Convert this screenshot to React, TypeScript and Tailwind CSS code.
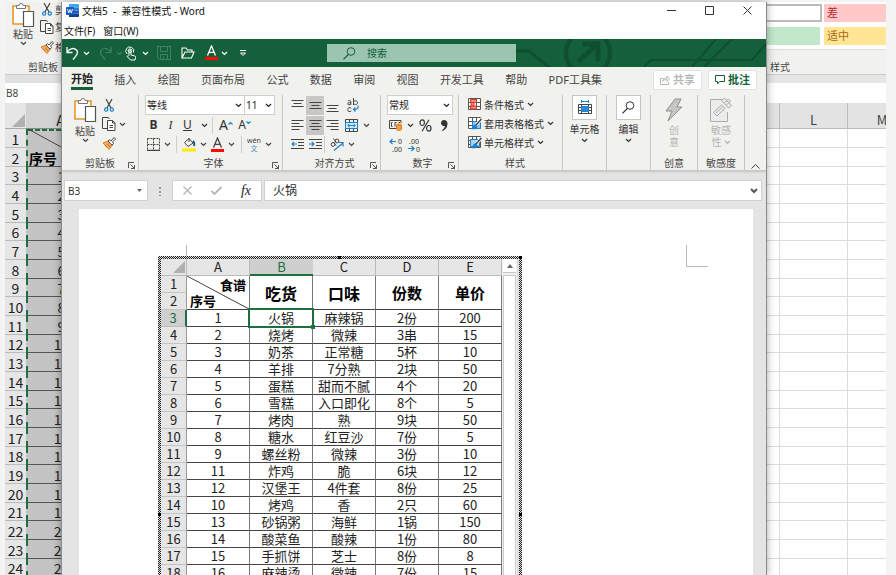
import type { ReactNode } from 'react';

const UI = "font-['Noto_Sans','Noto_Sans_CJK_SC',sans-serif]";
const SHEET = "font-['Noto_Sans_CJK_SC',sans-serif]";

const TABS = ['开始', '插入', '绘图', '页面布局', '公式', '数据', '审阅', '视图', '开发工具', '帮助', 'PDF工具集'];

const ROWS = [
  ['1', '火锅', '麻辣锅', '2份', '200'],
  ['2', '烧烤', '微辣', '3串', '15'],
  ['3', '奶茶', '正常糖', '5杯', '10'],
  ['4', '羊排', '7分熟', '2块', '50'],
  ['5', '蛋糕', '甜而不腻', '4个', '20'],
  ['6', '雪糕', '入口即化', '8个', '5'],
  ['7', '烤肉', '熟', '9块', '50'],
  ['8', '糖水', '红豆沙', '7份', '5'],
  ['9', '螺丝粉', '微辣', '3份', '10'],
  ['11', '炸鸡', '脆', '6块', '12'],
  ['12', '汉堡王', '4件套', '8份', '25'],
  ['10', '烤鸡', '香', '2只', '60'],
  ['13', '砂锅粥', '海鲜', '1锅', '150'],
  ['14', '酸菜鱼', '酸辣', '1份', '80'],
  ['15', '手抓饼', '芝士', '8份', '8'],
  ['16', '麻辣烫', '微辣', '7份', '15'],
];

const BACK_ROWS = Array.from({ length: 24 }, (_, i) => i + 1);

export default function App() {
  return (
    <div className={`flex h-screen overflow-hidden bg-[#f4f4f4] px-[5px] pt-[2px] text-[10px] leading-[14px] text-[#444] ${UI}`}>
      <ExcelLeft />
      <WordWindow />
      <ExcelRight />
      <div className="w-[5px] shrink-0" />
    </div>
  );
}

/* ---------- workbook behind the window ---------- */

function ExcelLeft() {
  return (
    <aside className="w-[56px] shrink-0 overflow-hidden bg-[#e4e4e4]">
      <div className="h-[72px] bg-[#f1f1ef]">
        <div className="flex h-[58px] gap-[5px] pl-[6px]">
          <div className="flex w-[24px] shrink-0 flex-col items-center whitespace-nowrap">
            <PasteIcon />
            <span>粘贴</span>
            <Chevron />
          </div>
          <div className="flex shrink-0 flex-col">
            <SmallRow icon={<ScissorsIcon />} text="剪切" />
            <SmallRow icon={<CopyIcon />} text="复制" />
            <SmallRow icon={<BrushIcon />} text="格式刷" />
          </div>
        </div>
        <div className="whitespace-nowrap pl-[23px]">剪贴板</div>
      </div>
      <div className="h-[9px] border-t border-[#ccc] bg-[#e1e1e1]" />
      <div className="h-[20px] bg-white pl-[1px] leading-[20px]">B8</div>
      <table className={`w-[90px] table-fixed border-separate border-spacing-0 text-center text-[14px] leading-[16px] text-[#222] ${SHEET}`}>
        <thead>
          <tr className="h-[26px]">
            <th className="w-[21px] border-b border-[#aaa] bg-[#e6e6e6] p-0">
              <svg className="mt-[8px] ml-[6px]" width="14" height="14"><path d="M14 1v13H1z" fill="#b1b1b1" /></svg>
            </th>
            <th className="w-[69px] border-b border-[#888] bg-[#d2d2d2] p-0 align-bottom font-normal">A</th>
          </tr>
        </thead>
        <tbody>
          {BACK_ROWS.map((n) => (
            <tr key={n} className={n % 3 === 0 ? 'h-[18px]' : 'h-[19px]'}>
              <th className="border-b border-[#bbb] bg-[#e6e6e6] p-0 align-bottom font-normal">{n}</th>
              {n === 1 && (
                <td rowSpan={2} className="relative border-b border-l-2 border-b-[#555] border-l-[#1d6f42] bg-[#c4c4c4] p-0 pl-[1px] text-left align-bottom font-bold text-black [border-left-style:dashed]">
                  <svg className="absolute top-0 left-0" width="68" height="38"><path d="M0 1h68" stroke="#1d6f42" strokeWidth="2" strokeDasharray="5 2" /><path d="M0 0L68 37" stroke="#444" /></svg>
                  序号
                </td>
              )}
              {n > 2 && (
                <td className="border-b border-l-2 border-b-[#555] border-l-[#1d6f42] bg-[#c4c4c4] p-0 align-bottom [border-left-style:dashed]">{n - 2}</td>
              )}
            </tr>
          ))}
        </tbody>
      </table>
    </aside>
  );
}

function SmallRow({ icon, text }: { icon: ReactNode; text: string }) {
  return (
    <div className="flex h-[20px] items-center gap-[1px] whitespace-nowrap first:h-[15px]">
      {icon}
      {text}
    </div>
  );
}

function ExcelRight() {
  return (
    <aside className="w-[119px] shrink-0 overflow-hidden bg-white">
      <div className="h-[72px] bg-[#f1f1ef]">
        <div className="grid h-[48px] grid-cols-[55px_1fr] gap-x-[2px] gap-y-[5px] border-b border-[#ddd] bg-white pt-[2px] pb-[4px] text-[11px] leading-[18px]">
          <div className="border-2 border-l-0 border-[#bbb]" />
          <div className="bg-[#ffc9c9] pl-[3px] text-[#b3262a]">差</div>
          <div className="mr-[2px] bg-[#c2e8cc]" />
          <div className="bg-[#ffe594] pl-[3px] text-[#a86a10]">适中</div>
        </div>
        <div className="pt-[10px] pl-[3px]">样式</div>
      </div>
      <div className="h-[9px] border-t border-[#ccc] bg-[#e6e6e6]" />
      <div className="h-[20px] bg-white" />
      <table className={`w-[149px] table-fixed border-separate border-spacing-0 text-[13px] leading-[16px] ${SHEET}`}>
        <thead>
          <tr className="h-[26px]">
            <th className="w-[13px] border-r border-b border-[#bbb] bg-[#e3e3e3] p-0" />
            <th className="w-[68px] border-r border-b border-[#bbb] bg-[#e3e3e3] p-0 align-bottom font-normal">L</th>
            <th className="w-[68px] border-b border-[#bbb] bg-[#e3e3e3] p-0 align-bottom font-normal">M</th>
          </tr>
        </thead>
        <tbody>
          {BACK_ROWS.map((n) => (
            <tr key={n} className={n % 3 === 0 ? 'h-[18px]' : 'h-[19px]'}>
              <td className="border-r border-b border-[#dcdcdc] p-0" />
              <td className="border-r border-b border-[#dcdcdc] p-0" />
              <td className="border-b border-[#dcdcdc] p-0" />
            </tr>
          ))}
        </tbody>
      </table>
    </aside>
  );
}

/* ---------- word window ---------- */

function WordWindow() {
  return (
    <main className="relative z-10 flex min-w-0 flex-1 flex-col overflow-hidden border-x border-[#8a8a8a] bg-[#e4e4e4] shadow-[0_0_8px_rgba(0,0,0,0.35)]">
      <header className="bg-white text-[#111]">
        <div className="flex h-[17px] items-center pl-[4px]">
          <WordIcon />
          <h1 className="flex-1 pl-[3px] text-[10px] whitespace-pre">{'文档5  -  兼容性模式 - Word'}</h1>
          <button aria-label="最小化" className="flex w-[38px] justify-center"><svg width="9" height="9"><path d="M0 4.5h9" stroke="#333" /></svg></button>
          <button aria-label="最大化" className="flex w-[38px] justify-center"><svg width="9" height="9"><path d="M.5.5h8v8h-8z" fill="none" stroke="#333" /></svg></button>
          <button aria-label="关闭" className="flex w-[38px] justify-center"><svg width="9" height="9"><path d="M.5.5l8 8m0-8l-8 8" stroke="#333" /></svg></button>
        </div>
        <div className="flex h-[20px] items-center gap-[8px] pl-[2px] pt-[4px]">
          <button>文件(F)</button>
          <button>窗口(W)</button>
        </div>
      </header>
      <QuickBar />
      <Ribbon />
      <FormulaBar />
      <Page />
    </main>
  );
}

function QuickBar() {
  return (
    <div className="relative flex h-[28px] shrink-0 items-center overflow-hidden bg-[#14603a] pl-[4px] text-white">
      <svg className="absolute top-0 right-0" width="260" height="28" fill="none" stroke="#0f4f30" strokeWidth="3">
        <path d="M8 12h15l21 17" />
        <circle cx="82" cy="14" r="22" strokeWidth="4" />
        <path d="M72 23L91 5M76 5h16v17" strokeWidth="5" />
        <path d="M138 28l7-7h100M186 28L210 0M198 28L226 0M246 21L260 5" strokeWidth="2" />
      </svg>
      <button aria-label="撤消" className="flex w-[33px] items-center gap-[4px]">
        <svg width="13" height="14" fill="none" stroke="currentColor" strokeWidth="1.3"><path d="M1 1v5.5h5.5M1 6.2C4 2 8 1.600 10.500 4c2.500 2.600 0 5.500-3.500 9.500" /></svg>
        <Chevron />
      </button>
      <button aria-label="恢复" className="flex w-[26px] items-center gap-[4px] text-[#3f8260]">
        <svg width="13" height="14" fill="none" stroke="currentColor" strokeWidth="1.2"><path d="M12 1v5.500H6.500M12 6.200C9 2 5 1.600 2.500 4c-2.500 2.600 0 5.500 3.500 9.500" /></svg>
        <Chevron />
      </button>
      <button aria-label="触摸/鼠标模式" className="flex w-[32px] items-center gap-[5px]">
        <svg width="12" height="15" fill="none" stroke="currentColor">
          <path d="M2.200 8A4 4 0 1 1 8.500 6.500" />
          <circle cx="5" cy="4.700" r="1.800" />
          <path d="M4 9.500V5a1 1 0 0 1 2 0v4l3.500.8c1 .3 1.200 1 1 2L10 14H5.500L2.500 11c-.8-1 .5-1.800 1.500-.8" />
        </svg>
        <Chevron />
      </button>
      <button aria-label="保存" className="w-[24px] text-[#3f8260]">
        <svg width="14" height="14" fill="none" stroke="currentColor"><path d="M.5.5h13v13h-11l-2-2zM3.500.5v5h7v-5M3.500 13V8.500h7V13M6.500 10.500v3" /></svg>
      </button>
      <button aria-label="打开" className="w-[24px]">
        <svg width="14" height="12" fill="none" stroke="currentColor" strokeWidth="1.1"><path d="M1 11V1h4l1.500 2H11v2M1 11h9.500l2.500-6H4z" /></svg>
      </button>
      <button aria-label="字体颜色" className="flex w-[34px] items-center gap-[3px]">
        <LetterBar className="text-white" />
        <Chevron />
      </button>
      <button aria-label="自定义快速访问工具栏">
        <svg width="8" height="8" fill="none" stroke="currentColor"><path d="M1 1.500h6M1.500 4L4 6.500 6.500 4z" /></svg>
      </button>
      <label className="relative ml-[80px] flex h-[18px] w-[189px] items-center bg-[#9bc5b1] pl-[16px] text-[#14603a]">
        <SearchIcon />
        <input aria-label="搜索" placeholder="搜索" className="w-full pl-[11px] outline-none placeholder:text-[#14603a]" />
      </label>
    </div>
  );
}

function Ribbon() {
  return (
    <section className="shrink-0 border-b border-[#c9c9c9] bg-[#f1f1ee] shadow-[0_1px_2px_rgba(0,0,0,0.15)]">
      <div className="flex h-[25px] items-center pr-[9px] pl-[9px]">
        <nav className="mr-[51px] flex flex-1 justify-between text-[11px]">
          {TABS.map((t, i) => (
            <button key={t} className={i === 0 ? 'border-b-3 border-[#14603a] pt-[3px] pb-[1px] font-bold whitespace-nowrap text-[#222]' : 'whitespace-nowrap'}>
              {t}
            </button>
          ))}
        </nav>
        <button className="mr-[6px] flex h-[20px] w-[49px] items-center justify-center gap-[3px] rounded-xs border border-[#e3e3e3] bg-white text-[11px] font-bold text-[#b8b8b8]">
          <svg width="10" height="10" fill="none" stroke="currentColor"><path d="M3.500 3.500h-3v6h8V7M2.500 6.500C3 4 5 3 7 3V1l2.500 3L7 6.500v-2c-2 0-3.500.5-4.500 2z" /></svg>
          共享
        </button>
        <button className="flex h-[20px] w-[49px] items-center justify-center gap-[3px] rounded-xs border border-[#e3e3e3] bg-white text-[11px] font-bold text-[#14603a]">
          <svg width="10" height="10" fill="none" stroke="currentColor"><path d="M.5.5h9v6H4.500L2.500 9V6.500h-2z" /></svg>
          批注
        </button>
      </div>
      <div className="flex h-[78px] pt-[3px]">
        <Group label="剪贴板" launcher className="w-[77px]">
          <div className="flex gap-[5px] pt-[2px] pl-[11px]">
            <div className="flex w-[24px] flex-col items-center">
              <PasteIcon />
              <button className="mt-[2px] flex flex-col items-center whitespace-nowrap">粘贴<Chevron /></button>
            </div>
            <div className="flex flex-col">
              <button aria-label="剪切" className="flex h-[17px] items-center"><ScissorsIcon /></button>
              <button aria-label="复制" className="flex h-[20px] items-center gap-[3px]"><CopyIcon /><Chevron /></button>
              <button aria-label="格式刷" className="flex h-[19px] items-center"><BrushIcon /></button>
            </div>
          </div>
        </Group>
        <Group label="字体" launcher className="w-[144px] pl-[6px]">
          <div className="flex">
            <Picker label="字体名称" value="等线" className="w-[100px]" />
            <Picker label="字号" value="11" className="-ml-px w-[31px]" />
          </div>
          <div className="flex h-[20px] items-center text-[12px] text-[#333]">
            <button className="w-[17px] font-bold">B</button>
            <button className="w-[17px] font-['Liberation_Serif',serif] italic">I</button>
            <button className="w-[17px] underline">U</button>
            <span className="flex w-[16px] justify-center"><Chevron /></span>
            <Bar />
            <button aria-label="增大字号" className="flex w-[20px] justify-end text-[14px]">A<Caret up /></button>
            <button aria-label="减小字号" className="flex w-[18px] justify-end text-[12px]">A<Caret /></button>
          </div>
          <div className="flex h-[19px] items-center">
            <button aria-label="边框" className="flex w-[31px] items-center gap-[4px] pl-[2px]">
              <svg width="13" height="13" fill="none" stroke="#444"><path d="M.5.5h12M.5.5v12M12.500.5v12M6.500.5v12M.5 6.500h12" strokeDasharray="2 1" /><path d="M0 12.500h13" strokeWidth="1.500" /></svg>
              <Chevron />
            </button>
            <Bar />
            <button aria-label="填充颜色" className="flex w-[34px] items-center gap-[4px] pl-[5px]">
              <svg width="14" height="15" fill="none" stroke="#444"><path d="M2.500 5.500L7 1.500l4 4.500-5 3.500zM7 1v4" /><path d="M11 4c1.500 1 1.500 3 1 5" stroke="#1f4f85" strokeWidth="1.800" /><path d="M0 13h14" stroke="#ffed00" strokeWidth="3" /></svg>
              <Chevron />
            </button>
            <button aria-label="字体颜色" className="flex w-[30px] items-center gap-[4px]">
              <LetterBar className="text-[#444]" />
              <Chevron />
            </button>
            <Bar />
            <button className="flex w-[30px] items-center gap-[4px] pl-[5px]">
              <span className="flex flex-col items-center text-[7px] leading-[8px]">wén<span className="text-[#4a90c8]">文</span></span>
              <Chevron />
            </button>
          </div>
        </Group>
        <Group label="对齐方式" launcher className="w-[98px] pl-[6px]">
          <div className="flex h-[20px] items-center">
            <AlignButton name="顶端对齐" d="M.5 1.500h12M2.500 4.500h8M.5 7.500h12" />
            <AlignButton name="垂直居中" d="M.5 3.500h12M2.500 6.500h8M.5 9.500h12" on />
            <AlignButton name="底端对齐" d="M.5 6.500h12M2.500 9.500h8M.5 12.500h12" />
            <button aria-label="自动换行" className="pl-[6px]">
              <svg width="12" height="15" fill="none" stroke="#444">
                <path d="M.8 3.200c.8-1 3-.9 3 .5V7M3.800 4.700C2 4.500.7 5 .7 6s2.300 1.200 3-.3M6.500 0v7M6.500 4.700c0-2.600 4-2.600 4 0s-4 2.600-4 0M4.300 10.300c-1.500-1.500-3.600-.6-3.600 1.300s2.100 2.700 3.600 1.300" />
                <path d="M11 7.500c.5 3-.5 4-4.500 4M8.500 9.500l-2 2 2 2" stroke="#1e7fcb" strokeWidth="1.200" />
              </svg>
            </button>
          </div>
          <div className="flex h-[20px] items-center">
            <AlignButton name="左对齐" d="M.5 1.500h12M.5 4.500h8M.5 7.500h12M.5 10.500h8" />
            <AlignButton name="居中" d="M.5 1.500h12M2.500 4.500h8M.5 7.500h12M2.500 10.500h8" on />
            <AlignButton name="右对齐" d="M.5 1.500h12M4.500 4.500h8M.5 7.500h12M4.500 10.500h8" />
            <button aria-label="合并后居中" className="flex items-center gap-[5px] pl-[4px]">
              <svg width="13" height="13" fill="none" stroke="#444"><path d="M.5.5h12v12H.5zM4.500.5v3m4-3v3m-4 6v3m4-3v3" /><path d="M.5 3.500h12v6H.5z" fill="#d5e9f8" stroke="#1e7fcb" /><path d="M3 6.500h7M4.500 4.800L2.800 6.500l1.700 1.700m4-3.400l1.700 1.700-1.700 1.700" stroke="#1e7fcb" /></svg>
              <Chevron />
            </button>
          </div>
          <div className="flex h-[19px] items-center">
            <button aria-label="减少缩进量" className="flex w-[17px] justify-center">
              <svg width="13" height="11" fill="none" stroke="#444"><path d="M0 .5h13M7 3.500h6M7 6.500h6M0 9.500h13" /><path d="M6 5H1m2.200-2.200L1 5l2.200 2.200" stroke="#1e7fcb" strokeWidth="1.200" /></svg>
            </button>
            <button aria-label="增加缩进量" className="flex w-[18px] justify-center">
              <svg width="13" height="11" fill="none" stroke="#444"><path d="M0 .5h13M7 3.500h6M7 6.500h6M0 9.500h13" /><path d="M0 5h5M2.800 2.800L5 5 2.800 7.200" stroke="#1e7fcb" strokeWidth="1.200" /></svg>
            </button>
            <Bar />
            <button aria-label="方向" className="flex items-center gap-[4px] pl-[5px]">
              <svg width="14" height="13" fill="none" stroke="#444">
                <circle cx="3" cy="6.500" r="1.900" />
                <path d="M3.500 4l2.500 3.500" />
                <circle cx="7" cy="3" r="1.900" />
                <path d="M3.500.5L6 4" />
                <path d="M4 12.500L13 5M9 4.500h4v4" stroke="#1e7fcb" strokeWidth="1.200" />
              </svg>
              <Chevron />
            </button>
          </div>
        </Group>
        <Group label="数字" launcher className="w-[78px] pl-[6px]">
          <Picker label="数字格式" value="常规" className="w-[66px]" />
          <div className="flex h-[20px] items-center text-[#333]">
            <button aria-label="会计数字格式" className="flex w-[32px] items-center gap-[4px] pl-[2px]">
              <svg width="14" height="12" fill="none" stroke="#444"><path d="M12 4V1.500H.5v8H7M3.500 3.500h-1v4h1M6 7.500V3.500h1.500M9.500 3.500H11" /><path d="M7.500 6v4.500c0 1.300 5 1.300 5 0V6c0-1.300-5-1.300-5 0zm0 0c0 1.200 5 1.200 5 0m-5 2.300c0 1.200 5 1.200 5 0" fill="#f7b267" stroke="#e07b1a" /></svg>
              <Chevron />
            </button>
            <button aria-label="百分比样式" className="flex w-[22px]">
              <svg width="13" height="13" fill="none" stroke="#333" strokeWidth="1.200"><ellipse cx="3.200" cy="3.700" rx="2.200" ry="2.800" /><ellipse cx="9.800" cy="9.300" rx="2.200" ry="2.800" /><path d="M10 .8L3 12.200" /></svg>
            </button>
            <button aria-label="千位分隔样式"><svg width="7" height="11"><path d="M3 0a3 3 0 1 0 .8 5.900C3.500 8 2.500 9.200.8 10.300l.6.7C5 9.500 6.500 7 6.500 3.500 6.500 1.200 5 0 3 0z" fill="#333" /></svg></button>
          </div>
          <div className="flex h-[19px] items-center gap-[4px] pl-[2px]">
            <button aria-label="增加小数位数"><DecimalIcon up /></button>
            <button aria-label="减少小数位数"><DecimalIcon /></button>
          </div>
        </Group>
        <Group label="样式" className="w-[104px] pl-[9px]">
          <StyleRow text="条件格式" icon={<GridIcon kind="cond" />} />
          <StyleRow text="套用表格格式" icon={<GridIcon kind="table" />} />
          <StyleRow text="单元格样式" icon={<GridIcon kind="cell" />} />
        </Group>
        <Group className="w-[44px]">
          <BoxButton text="单元格">
            <svg width="14" height="16" fill="none" stroke="#444"><path d="M.5 4.500h13v9H.5zM.5 7.500h13M.5 10.500h13M3.500 4v10M10.500 4v10" /><path d="M3.500 6.500h7v5h-7z" fill="#2b8bd8" stroke="#1e7fcb" /><path d="M3.500 0v3m7-3v3m-7-1.500h7" stroke="#1e7fcb" /></svg>
          </BoxButton>
        </Group>
        <Group className="w-[44px]">
          <BoxButton text="编辑"><SearchIcon /></BoxButton>
        </Group>
        <Group label="创意" className="w-[47px]">
          <button className="flex w-full flex-col items-center pt-[3px] leading-[12px] text-[#b4b4b4]">
            <svg width="18" height="24"><path d="M10 1h6l-4 8h5L3 23l4-10H1z" fill="#c6c6c6" stroke="#8f8f8f" /></svg>
            <span className="mt-[2px]">创</span>
            <span>意</span>
          </button>
        </Group>
        <Group label="敏感度" className="w-[47px]">
          <button className="flex w-full flex-col items-center pt-[2px] leading-[12px] text-[#b4b4b4]">
            <svg width="24" height="25" fill="none" stroke="#aaa">
              <path d="M13 2.500H1.500v22h17V15" fill="#ececec" />
              <path d="M4.500 15.500l8-7.500 3.500 3.500-8 7.500zM7 16l6.500-6" />
              <path d="M12.500 3.500l3-2.500 7 7.500-3 2.500zM15.500 6l4-4 2 2-4 4" fill="#ececec" />
            </svg>
            <span className="mt-[2px]">敏感</span>
            <span className="flex items-center gap-[2px]">性<Chevron /></span>
          </button>
        </Group>
        <button aria-label="折叠功能区" className="mt-auto mb-[1px] ml-[6px]">
          <svg width="9" height="6" fill="none" stroke="#444"><path d="M.5 5.500l4-4 4 4" /></svg>
        </button>
      </div>
    </section>
  );
}

function Group({ label, launcher, className, children }: { label?: string; launcher?: boolean; className: string; children: ReactNode }) {
  return (
    <div className={`flex shrink-0 flex-col border-r border-[#c6c6c6] ${className}`}>
      <div className="h-[61px]">{children}</div>
      <div className="relative flex h-[14px] justify-center leading-[14px]">
        {label}
        {launcher && (
          <button aria-label={`${label}设置`} className="absolute right-[3px] bottom-[1px]">
            <svg width="7" height="7" fill="none" stroke="#555"><path d="M.5 6V.5H6M2.500 2.500l4 4M6.500 3v3.500H3" /></svg>
          </button>
        )}
      </div>
    </div>
  );
}

function Picker({ label, value, className }: { label: string; value: string; className: string }) {
  return (
    <div className={`relative flex h-[20px] items-center border border-[#cfcfcf] bg-white text-[#222] ${className}`}>
      <select aria-label={label} defaultValue={value} className="w-full appearance-none pl-[1px] outline-none">
        <option>{value}</option>
      </select>
      <span className="pointer-events-none absolute right-[2px]"><Chevron /></span>
    </div>
  );
}

function AlignButton({ name, d, on }: { name: string; d: string; on?: boolean }) {
  return (
    <button aria-label={name} className={on ? 'flex h-[19px] w-[18px] items-center justify-center bg-[#c9c7c5]' : 'flex h-[19px] w-[17px] items-center justify-center'}>
      <svg width="13" height="13" fill="none" stroke="#444"><path d={d} /></svg>
    </button>
  );
}

function StyleRow({ icon, text }: { icon: ReactNode; text: string }) {
  return (
    <button className="flex h-[19px] items-center gap-[2px] whitespace-nowrap text-[#333]">
      {icon}
      <span className="pr-[1px]">{text}</span>
      <Chevron />
    </button>
  );
}

function BoxButton({ text, children }: { text: string; children: ReactNode }) {
  return (
    <button className="flex w-full flex-col items-center whitespace-nowrap text-[#333]">
      <span className="mb-[2px] flex h-[25px] w-[25px] items-center justify-center border border-[#c6c6c6] bg-white">{children}</span>
      <span className="mb-[2px]">{text}</span>
      <Chevron />
    </button>
  );
}

function FormulaBar() {
  return (
    <div className="mt-[9px] flex h-[21px] shrink-0 items-stretch pr-[4px] pl-[2px] text-[#333]">
      <div className="relative flex w-[84px] items-center border border-[#d0d0d0] bg-white">
        <input aria-label="名称框" defaultValue="B3" className="w-full pl-[3px] outline-none" />
        <svg className="absolute right-[5px]" width="5" height="3"><path d="M0 0h5L2.500 3z" fill="#666" /></svg>
      </div>
      <svg className="mx-[11px] self-center" width="2" height="10"><path d="M1 1v9" stroke="#999" strokeWidth="2" strokeDasharray="2 2" /></svg>
      <div className="flex w-[90px] items-center justify-between border border-[#d0d0d0] bg-white px-[10px]">
        <button aria-label="取消"><svg width="9" height="9"><path d="M.5.5l8 8m0-8l-8 8" stroke="#b5b5b5" strokeWidth="1.300" /></svg></button>
        <button aria-label="输入"><svg width="11" height="9" fill="none"><path d="M.5 5l3 3L10.500 1" stroke="#b5b5b5" strokeWidth="1.800" /></svg></button>
        <button className="font-['Liberation_Serif',serif] text-[14px] text-[#222] italic">fx</button>
      </div>
      <div className="relative ml-[2px] flex flex-1 items-center border border-[#d0d0d0] bg-white">
        <input aria-label="编辑栏" defaultValue="火锅" className="w-full pl-[8px] text-[12px] outline-none" />
        <svg className="absolute right-[3px]" width="8" height="6" fill="none"><path d="M1 1l3 3 3-3" stroke="#555" strokeWidth="2" /></svg>
      </div>
    </div>
  );
}

function Page() {
  return (
    <div className="mt-[8px] mr-[13px] ml-[17px] flex min-h-0 flex-1 justify-between overflow-hidden bg-white pt-[36px] pr-[45px] pl-[79px]">
      <div className="shrink-0">
        <div className="ml-[28px] h-[11px] w-px bg-[#bbb]" />
        <div className="relative flex h-[516px] w-[364px] bg-[repeating-conic-gradient(#222_0_25%,#ddd_0_50%)] bg-[length:2px_2px] p-[3px]">
          <span className="absolute top-0 left-[180px] size-[3px] bg-black" />
          <span className="absolute top-0 right-0 size-[3px] bg-black" />
          <span className="absolute top-[257px] left-0 size-[3px] bg-black" />
          <span className="absolute top-[257px] right-0 size-[3px] bg-black" />
          <FoodTable />
          <div className="w-[17px] border-r-2 border-[#ddd] bg-[#f0f0f0] px-px">
            <button aria-label="向上滚动" className="flex h-[14px] w-full items-center justify-center border-b border-[#c6c6c6] bg-white">
              <svg width="6" height="4"><path d="M0 4h6L3 0z" fill="#666" /></svg>
            </button>
            <div className="mt-[2px] h-full border border-b-0 border-[#ccc] bg-white" />
          </div>
        </div>
      </div>
      <div className="size-[22px] border-b border-l border-[#bbb]" />
    </div>
  );
}

function FoodTable() {
  const cell = 'border-r border-b border-r-[#777] border-b-[#444] p-0';
  return (
    <div className="w-[341px] bg-white">
      <table className={`w-[341px] table-fixed border-separate border-spacing-0 text-center text-[13px] leading-[16px] text-[#222] ${SHEET}`}>
        <thead>
          <tr className="h-[17px]">
            <th className="w-[26px] border-r border-b border-[#bbb] bg-[#e6e6e6] p-0">
              <svg className="ml-auto mr-px" width="12" height="12"><path d="M12 0v12H0z" fill="#b1b1b1" /></svg>
            </th>
            {['A', 'B', 'C', 'D', 'E'].map((c) => (
              <th key={c} className={c === 'B' ? 'w-[63px] border-b-2 border-[#1d6f42] bg-[#cfcfcf] p-0 font-normal leading-[15px] text-[#1d6f42]' : 'w-[63px] border-r border-b border-[#bbb] bg-[#e6e6e6] p-0 font-normal'}>
                {c}
              </th>
            ))}
          </tr>
        </thead>
        <tbody>
          <tr className="h-[17px]">
            <RowHead n={1} />
            <th rowSpan={2} className={`relative text-black ${cell}`}>
              <svg className="absolute top-0 left-0" width="62" height="33"><path d="M0 0l62 33" stroke="#444" /></svg>
              <div className="pr-[3px] text-right leading-[17px]">食谱</div>
              <div className="pl-[3px] text-left leading-[16px]">序号</div>
            </th>
            <th rowSpan={2} className={`text-[16px] text-black ${cell}`}>吃货</th>
            <th rowSpan={2} className={`text-[16px] text-black ${cell}`}>口味</th>
            <th rowSpan={2} className={`text-[15px] text-black ${cell}`}>份数</th>
            <th rowSpan={2} className={`text-[15px] text-black ${cell}`}>单价</th>
          </tr>
          <tr className="h-[17px]">
            <RowHead n={2} />
          </tr>
          {ROWS.map((row, i) => (
            <tr key={row[0]} className="h-[17px]">
              <RowHead n={i + 3} />
              {row.map((v, j) => (
                <td key={j} className={i === 0 && j === 1 ? `relative ${cell}` : cell}>
                  {v}
                  {i === 0 && j === 1 && (
                    <span className="absolute -top-[2px] -right-[2px] -bottom-[2px] -left-[2px] border-2 border-[#1d6f42]">
                      <span className="absolute -right-[3px] -bottom-[3px] size-[4px] bg-[#1d6f42]" />
                    </span>
                  )}
                </td>
              ))}
            </tr>
          ))}
        </tbody>
      </table>
    </div>
  );
}

function RowHead({ n }: { n: number }) {
  return (
    <th className={n === 3 ? 'border-r-2 border-b border-r-[#1d6f42] border-b-[#bbb] bg-[#cfcfcf] p-0 font-normal text-[#1d6f42]' : 'border-r border-b border-r-[#999] border-b-[#c4c4c4] bg-[#e6e6e6] p-0 font-normal'}>
      {n}
    </th>
  );
}

/* ---------- icons ---------- */

function Chevron() {
  return <svg className="shrink-0" width="7" height="5" fill="none"><path d="M1 1l2.500 2.500L6 1" stroke="currentColor" strokeWidth="1.200" /></svg>;
}

function Caret({ up }: { up?: boolean }) {
  return <svg width="5" height="4" fill="none" className="mt-[3px]"><path d={up ? 'M.5 3.500l2-2 2 2' : 'M.5.5l2 2 2-2'} stroke="#1e7fcb" strokeWidth="1.200" /></svg>;
}

function Bar() {
  return <span className="h-[17px] w-px bg-[#cfcfcf]" />;
}

function LetterBar({ className }: { className: string }) {
  return (
    <svg className={className} width="13" height="16">
      <path d="M2.500 10.500L6.500 1l4 9.500M4 7.300h5" fill="none" stroke="currentColor" strokeWidth="1.300" />
      <path d="M0 13.500h13" stroke="#ff0a00" strokeWidth="3" />
    </svg>
  );
}

function WordIcon() {
  return (
    <svg width="13" height="13">
      <path d="M3 0h9a1 1 0 0 1 1 1v2.500H3z" fill="#41a5ee" />
      <path d="M3 3.500h10v3H3z" fill="#2b7cd3" />
      <path d="M3 6.500h10v3H3z" fill="#185abd" />
      <path d="M3 9.500h10V12a1 1 0 0 1-1 1H3z" fill="#103f91" />
      <rect y="3" width="8" height="8" rx="1" fill="#185abd" />
      <path d="M1.500 5l1.200 4L4 5.500 5.300 9l1.200-4" fill="none" stroke="#fff" strokeWidth=".9" />
    </svg>
  );
}

function SearchIcon() {
  return <svg className="shrink-0" width="13" height="13" fill="none" stroke="currentColor"><circle cx="8" cy="4.500" r="3.800" /><path d="M5.300 7.500L.5 12.300" strokeWidth="1.200" /></svg>;
}

function PasteIcon() {
  return (
    <svg className="shrink-0" width="24" height="25" fill="none">
      <path d="M2 4h16v18H2z" fill="#fff" stroke="#e8942d" strokeWidth="1.600" />
      <path d="M5.500 6.500V3.500H8a2 2 0 0 1 4 0h2.500v3z" fill="#fff" stroke="#777" />
      <path d="M12.500 9.500h10v15h-10z" fill="#fff" stroke="#555" strokeWidth="1.200" />
    </svg>
  );
}

function ScissorsIcon() {
  return (
    <svg className="mx-[2px] shrink-0" width="10" height="13" fill="none">
      <path d="M2 0l5 9M8 0L3 9" stroke="#444" strokeWidth="1.200" />
      <circle cx="2.200" cy="10.500" r="1.600" stroke="#1e7fcb" strokeWidth="1.200" />
      <circle cx="7.800" cy="10.500" r="1.600" stroke="#1e7fcb" strokeWidth="1.200" />
    </svg>
  );
}

function CopyIcon() {
  return (
    <svg className="shrink-0" width="14" height="14" fill="none" stroke="#444">
      <path d="M5 11.500H.5v-11h6l1 1.500" />
      <path d="M5.500 3.500h5l2.500 2.500v7.500H5.500z" fill="#fff" />
      <path d="M10.500 3.500V6H13M7.500 8.500h3.500M7.500 10.500h3.500" />
    </svg>
  );
}

function BrushIcon() {
  return (
    <svg className="shrink-0" width="14" height="13" fill="none">
      <path d="M1 6l5-2 4 4.500-3 4z" fill="#f6b26b" stroke="#e07b1a" />
      <path d="M3 8l2 2M5 6.500l3 3.500" stroke="#c9600c" />
      <path d="M6 4l1.500-1.200L9 4l3-3.500L13.500 2l-3 3 1 1.500-1.500 1.800z" fill="#fff" stroke="#444" />
    </svg>
  );
}

function DecimalIcon({ up }: { up?: boolean }) {
  return (
    <svg width="14" height="14">
      <text x={up ? 9 : 2} y="6" fontSize="7" fill="#333">{up ? '0' : '.00'}</text>
      <text x={up ? 3 : 9} y="14" fontSize="7" fill="#333">{up ? '.00' : '0'}</text>
      <path d={up ? 'M7 3.500H1M3.500 1L1 3.500 3.500 6' : 'M1 10.500h6M4.500 8L7 10.500 4.500 13'} fill="none" stroke="#1e7fcb" strokeWidth="1.200" />
    </svg>
  );
}

function GridIcon({ kind }: { kind: 'cond' | 'table' | 'cell' }) {
  return (
    <svg className="shrink-0" width="14" height="13" fill="none" stroke="#555">
      <path d="M.5.5h12v11H.5zM.5 4.500h12M.5 8.500h12M4.500.5v11M8.500.5v11" fill="#fff" />
      {kind === 'cond' && <path d="M2.500 1.500h6v3h-6zM2.500 8h6v3h-6zM3 4.500h3V8H3z" fill="#f28b82" stroke="#d93a2b" />}
      {kind === 'table' && <path d="M4.500 4.500h8v7h-8z" fill="#8cc4ee" stroke="#1e7fcb" />}
      {kind === 'cell' && <path d="M2.500 3.500h9v7h-9z" fill="#a9d2f3" stroke="#1e7fcb" />}
      {kind !== 'cond' && (
        <>
          <path d="M13.500 2L7.500 8.500" stroke="#fff" strokeWidth="3" />
          <path d="M13.500 2L7.500 8.500" stroke="#444" strokeWidth="1.500" />
          <path d="M7.500 7.500c-2 0-2 3-4 4 3 1 5.500 0 5.500-2z" fill="#1e7fcb" stroke="#1e7fcb" />
        </>
      )}
    </svg>
  );
}
